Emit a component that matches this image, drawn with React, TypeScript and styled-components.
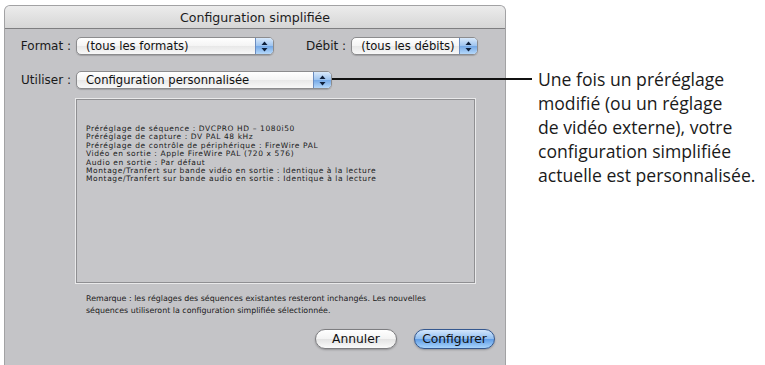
import React from "react";
import styled, { createGlobalStyle } from "styled-components";

const Global = createGlobalStyle`
  html, body { margin: 0; padding: 0; background: #ffffff; }
  body { width: 765px; height: 365px; overflow: hidden; font-family: "DejaVu Sans", "Liberation Sans", sans-serif; }
`;

const Stage = styled.div`
  display: flex;
  align-items: flex-start;
  padding: 5px 0 0 4px;
  height: 365px;
  box-sizing: border-box;
  overflow: hidden;
`;

const Dialog = styled.div`
  flex: none;
  width: 502px;
  height: 372px;
  box-sizing: border-box;
  background: #c4c4c7;
  border: 1px solid #a2a2a4;
  border-bottom: none;
  border-radius: 6px 6px 0 0;
  display: flex;
  flex-direction: column;
  overflow: hidden;
`;

const TitleBar = styled.div`
  flex: none;
  height: 22px;
  background: linear-gradient(#ececec, #d6d6d6);
  border-bottom: 1px solid #7e7e80;
  display: flex;
  align-items: center;
  justify-content: center;
  font-size: 12.6px;
  color: #1c1c1c;
`;

const Body = styled.div`
  display: flex;
  flex-direction: column;
  padding: 8px 0 0 0;
`;

const Row = styled.div<{ $mt?: number }>`
  display: flex;
  align-items: center;
  height: 18px;
  margin-top: ${(p) => p.$mt ?? 0}px;
`;

const Label = styled.span<{ $w?: number; $ml?: number }>`
  width: ${(p) => (p.$w ? `${p.$w}px` : "auto")};
  margin-left: ${(p) => p.$ml ?? 0}px;
  margin-right: 5px;
  text-align: right;
  font-size: 12px;
  color: #1a1a1a;
  white-space: nowrap;
`;

const Popup = styled.div<{ $w: number }>`
  width: ${(p) => p.$w}px;
  height: 18px;
  box-sizing: border-box;
  display: flex;
  border: 1px solid #8c8c8e;
  border-radius: 5px;
  overflow: hidden;
  background: linear-gradient(#ffffff, #f4f4f4 50%, #e8e8e8 51%, #f8f8f8);
  box-shadow: 0 1px 1px rgba(0, 0, 0, 0.18);
`;

const PopupText = styled.span`
  flex: 1;
  padding-left: 9px;
  font-size: 11.6px;
  line-height: 16px;
  color: #111;
  white-space: nowrap;
`;

const Stepper = styled.span`
  flex: none;
  width: 17px;
  border-left: 1px solid #6a8cc0;
  background: linear-gradient(#d8e9fb, #9cc3ef 50%, #74a8e6 51%, #b5d8fa);
  display: flex;
  align-items: center;
  justify-content: center;
`;

const InfoBox = styled.div`
  margin: 10px 0 0 71px;
  width: 399px;
  height: 184px;
  box-sizing: border-box;
  background: #c6c6c9;
  border: 1px solid #8f8f92;
  box-shadow: 0 0 0 1px #e9e9ea;
  padding: 25px 0 0 9px;
  display: flex;
  flex-direction: column;
`;

const InfoLine = styled.span`
  font-size: 7.5px;
  letter-spacing: 0.6px;
  line-height: 8.4px;
  color: #1a1a1a;
  white-space: nowrap;
`;

const Note = styled.p`
  margin: 10px 0 0 81px;
  font-size: 7.9px;
  line-height: 12px;
  color: #1a1a1a;
  white-space: pre-line;
`;

const Buttons = styled.div`
  display: flex;
  gap: 17px;
  margin: 12px 0 0 310px;
`;

const PushButton = styled.button<{ $default?: boolean; $w: number }>`
  width: ${(p) => p.$w}px;
  height: 20px;
  padding: 0;
  border-radius: 10px;
  border: 1px solid ${(p) => (p.$default ? "#35588f" : "#7d7d80")};
  background: ${(p) =>
    p.$default
      ? "linear-gradient(#d3e6fb, #8fbdf0 50%, #5f9ce6 51%, #a8d4fb)"
      : "linear-gradient(#ffffff, #f3f3f3 50%, #e3e3e3 51%, #fafafa)"};
  box-shadow: 0 1px 2px rgba(0, 0, 0, 0.25);
  font-family: "DejaVu Sans", sans-serif;
  font-size: 12.3px;
  color: #111;
  line-height: 18px;
`;

const Callout = styled.div`
  flex: none;
  display: flex;
  align-items: flex-start;
  margin-left: -174px;
`;

const Leader = styled.span`
  flex: none;
  width: 200px;
  height: 1.5px;
  margin-top: 73px;
  background: #111;
`;

const CalloutText = styled.p`
  margin: 62px 0 0 6px;
  font-family: "Open Sans", "Lato", sans-serif;
  font-size: 17.6px;
  line-height: 24px;
  color: #1a1a1a;
  white-space: pre-line;
`;

const Arrows = () => (
  <svg width="7" height="11" viewBox="0 0 7 11">
    <path d="M3.5 0.5 L6.5 4 L0.5 4 Z" fill="#0e1f3a" />
    <path d="M3.5 10.5 L6.5 7 L0.5 7 Z" fill="#0e1f3a" />
  </svg>
);

const PopupButton = ({ w, text }: { w: number; text: string }) => (
  <Popup $w={w}>
    <PopupText>{text}</PopupText>
    <Stepper>
      <Arrows />
    </Stepper>
  </Popup>
);

const infoLines = [
  "Préréglage de séquence : DVCPRO HD – 1080i50",
  "Préréglage de capture : DV PAL 48 kHz",
  "Préréglage de contrôle de périphérique : FireWire PAL",
  "Vidéo en sortie : Apple FireWire PAL (720 x 576)",
  "Audio en sortie : Par défaut",
  "Montage/Tranfert sur bande vidéo en sortie : Identique à la lecture",
  "Montage/Tranfert sur bande audio en sortie : Identique à la lecture",
];

export default function App() {
  return (
    <>
      <Global />
      <Stage>
        <Dialog>
          <TitleBar>Configuration simplifiée</TitleBar>
          <Body>
            <Row>
              <Label $w={66}>Format :</Label>
              <PopupButton w={198} text="(tous les formats)" />
              <Label $ml={32}>Débit :</Label>
              <PopupButton w={127} text="(tous les débits)" />
            </Row>
            <Row $mt={16}>
              <Label $w={66}>Utiliser :</Label>
              <PopupButton w={256} text="Configuration personnalisée" />
            </Row>
            <InfoBox>
              {infoLines.map((l) => (
                <InfoLine key={l}>{l}</InfoLine>
              ))}
            </InfoBox>
            <Note>
              {"Remarque : les réglages des séquences existantes resteront inchangés. Les nouvelles\nséquences utiliseront la configuration simplifiée sélectionnée."}
            </Note>
            <Buttons>
              <PushButton $w={82}>Annuler</PushButton>
              <PushButton $w={81} $default>
                Configurer
              </PushButton>
            </Buttons>
          </Body>
        </Dialog>
        <Callout>
          <Leader />
          <CalloutText>
            {"Une fois un préréglage\nmodifié (ou un réglage\nde vidéo externe), votre\nconfiguration simplifiée\nactuelle est personnalisée."}
          </CalloutText>
        </Callout>
      </Stage>
    </>
  );
}
